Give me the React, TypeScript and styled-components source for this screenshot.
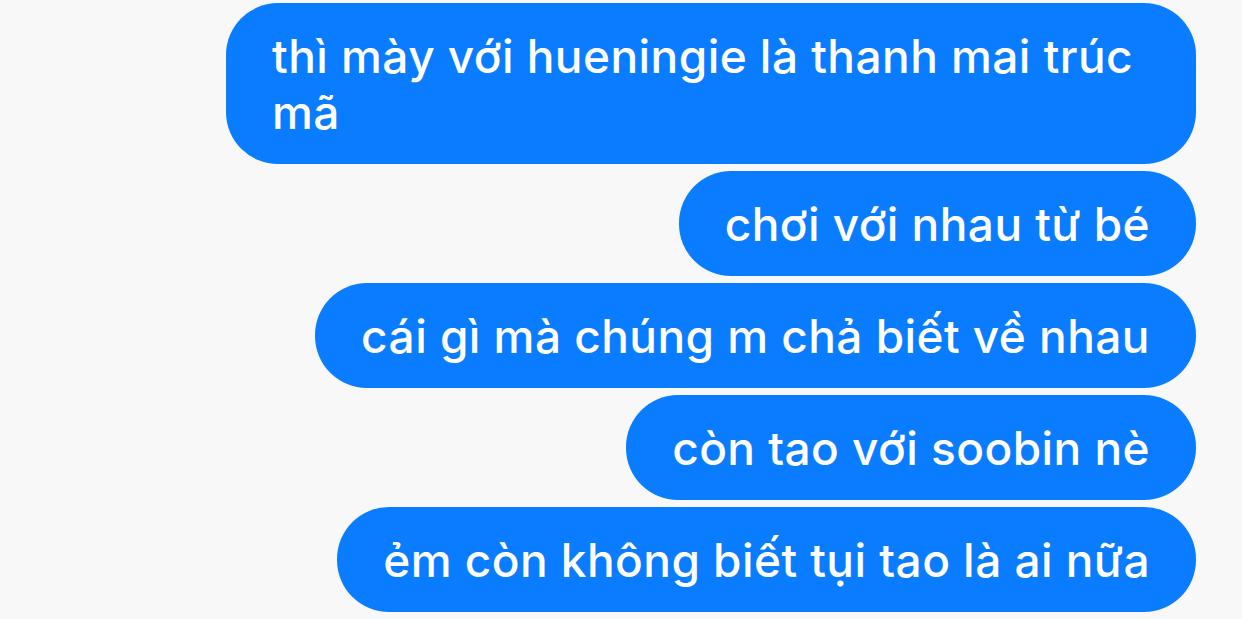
import React from 'react';
import styled, { createGlobalStyle } from 'styled-components';

const GlobalStyle = createGlobalStyle`
    html, body {
        margin: 0;
        padding: 0;
        background: #f8f8f8;
    }
`;

const Thread = styled.main`
    width: 1242px;
    height: 619px;
    box-sizing: border-box;
    padding: 3px 46px 0 0;
    display: flex;
    flex-direction: column;
    align-items: flex-end;
    gap: 7px;
    overflow: hidden;
    background: #f8f8f8;
`;

const Bubble = styled.div`
    max-width: 970px;
    box-sizing: border-box;
    padding: 24.5px 46px;
    border-radius: 52px;
    background: #0a7cff;
    color: #fff;
    font-family: Inter, "Noto Sans", sans-serif;
    font-weight: 500;
    font-size: 46px;
    line-height: 56px;
    letter-spacing: 0.45px;
`;

const messages = [
    'thì mày với hueningie là thanh mai trúc mã',
    'chơi với nhau từ bé',
    'cái gì mà chúng m chả biết về nhau',
    'còn tao với soobin nè',
    'ẻm còn không biết tụi tao là ai nữa',
];

export default function App() {
    return (
        <>
            <GlobalStyle />
            <Thread>
                {messages.map(text => (
                    <Bubble key={text}>{text}</Bubble>
                ))}
            </Thread>
        </>
    );
}
